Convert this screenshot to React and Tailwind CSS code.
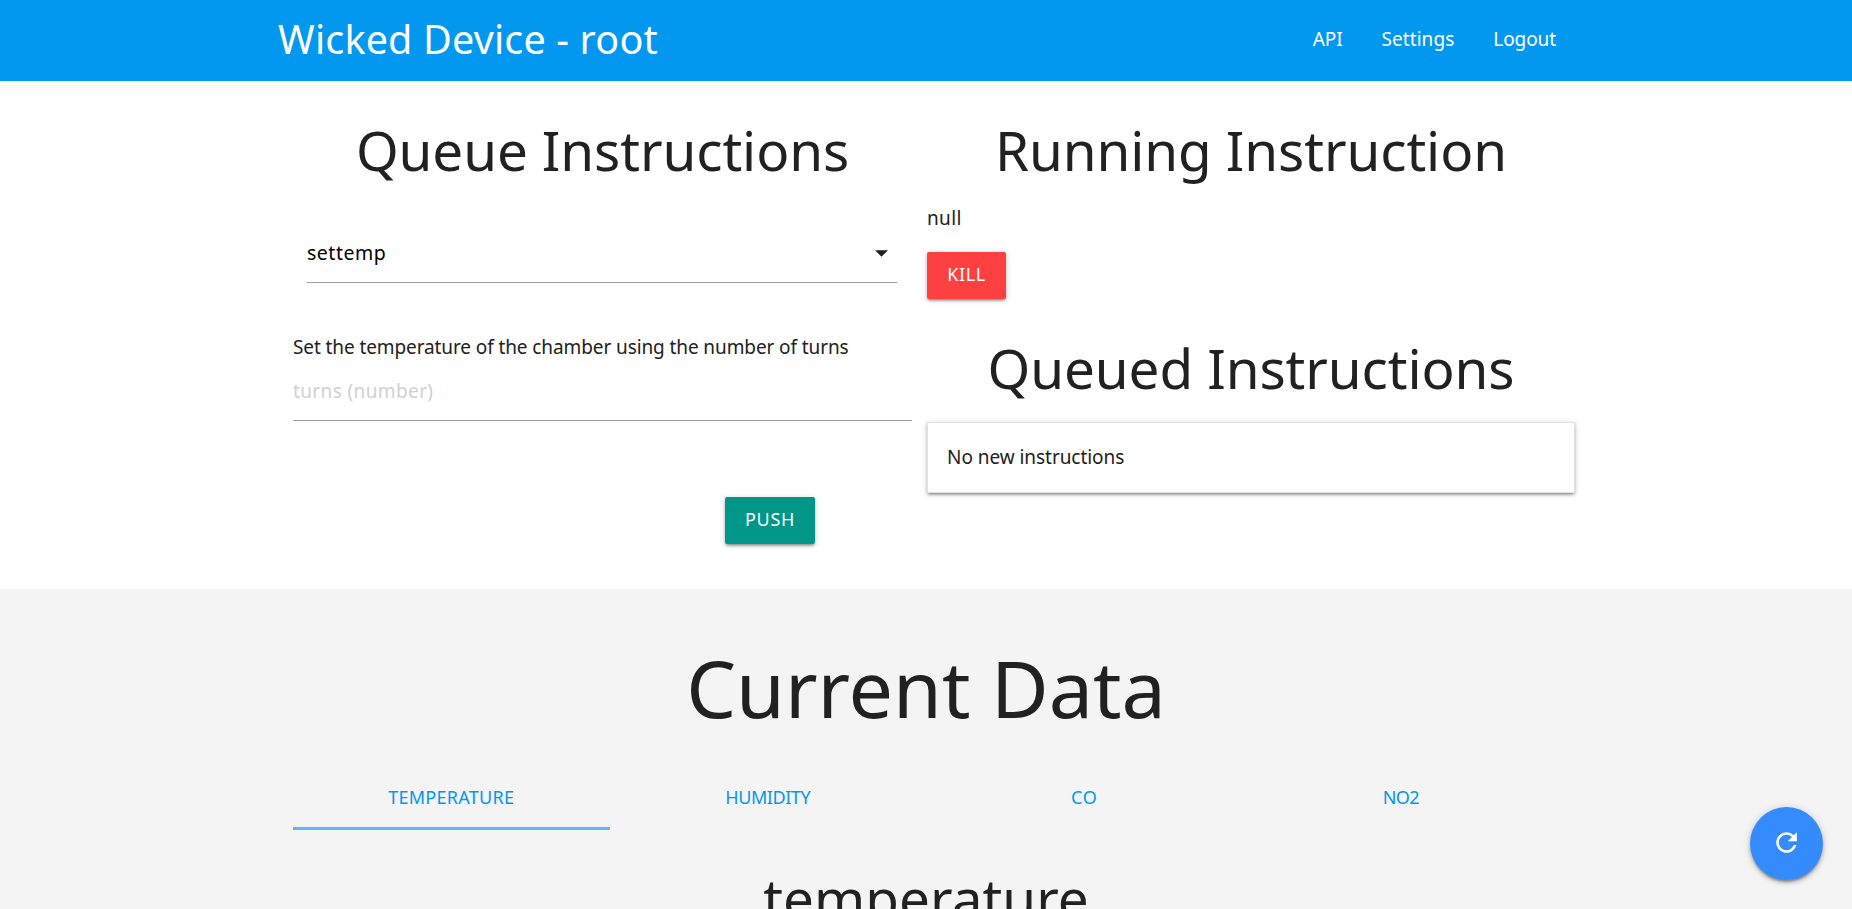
const elevation =
  "shadow-[0_2px_3px_0_rgba(0,0,0,0.2),0_1px_6px_0_rgba(0,0,0,0.16),0_3px_2px_-2px_rgba(0,0,0,0.24)]";

const tabs = [
  { label: "Temperature", active: true, tracking: "tracking-[0.28px]" },
  { label: "Humidity", tracking: "tracking-[-0.45px]" },
  { label: "CO", tracking: "tracking-[0.6px]" },
  { label: "NO2", tracking: "tracking-[-0.6px]" },
];

function Heading({ children, className = "" }) {
  return (
    <h3 className={`text-center text-[54.8px] leading-[80px] tracking-[-0.1px] ${className}`}>
      {children}
    </h3>
  );
}

function Header() {
  return (
    <nav className="h-[81px] shrink-0 bg-[#0298f0] text-white">
      <div className="flex justify-between pl-[278px] pr-[296px] leading-[78px]">
        <a className="text-[39.5px] tracking-[0.17px]">Wicked Device - root</a>
        <ul className="flex gap-[39px] text-[19px]">
          <li className="tracking-[-0.1px]">API</li>
          <li className="tracking-[0.07px]">Settings</li>
          <li className="tracking-[-0.1px]">Logout</li>
        </ul>
      </div>
    </nav>
  );
}

function QueueForm() {
  return (
    <section className="flex w-[619px] flex-col">
      <Heading>Queue Instructions</Heading>
      <div className="ml-[14px] mr-[15px] mt-[35px] flex h-[58px] items-center justify-between border-b border-[#9e9e9e] pr-[9px]">
        <span className="pb-px text-[19.5px] leading-[56px] tracking-[0.5px] text-black">settemp</span>
        <svg className="h-[7px] w-[13px]" viewBox="0 0 13 7" fill="currentColor">
          <path d="M0 .3h13L6.5 6.7z" />
        </svg>
      </div>
      <p className="mt-[50px] whitespace-nowrap text-[19px] leading-7 tracking-[-0.1px]">
        Set the temperature of the chamber using the number of turns
      </p>
      <input
        className="mt-[2px] h-[58px] border-b border-[#9e9e9e] pb-px text-[19px] tracking-[0.38px] outline-none placeholder:text-[#d1d1d1]"
        placeholder="turns (number)"
      />
      <button
        className={`ml-[432px] mt-[76px] h-[47px] w-[90px] rounded-[2px] bg-[#009688] pb-[3px] text-[18px] leading-[44px] tracking-[0.69px] text-white ${elevation}`}
      >
        PUSH
      </button>
    </section>
  );
}

function Instructions() {
  return (
    <section className="flex w-[648px] flex-col">
      <Heading>Running Instruction</Heading>
      <p className="mt-[14px] text-[19px] leading-7 tracking-[0.35px]">null</p>
      <button
        className={`mt-5 h-[47px] w-[79px] rounded-[2px] bg-[#ff4040] pb-[3px] text-[18px] leading-[44px] tracking-[0.6px] text-white ${elevation}`}
      >
        KILL
      </button>
      <Heading className="mt-[29px]">Queued Instructions</Heading>
      <div
        className={`mt-[14px] h-[71px] border border-[#e0e0e0] bg-white pl-[19px] text-[19px] leading-[68px] tracking-[-0.05px] ${elevation}`}
      >
        No new instructions
      </div>
    </section>
  );
}

function CurrentData() {
  return (
    <section className="grow bg-[#f4f4f4] pt-[44px]">
      <h2 className="text-center text-[79px] leading-[110px]">Current Data</h2>
      <ul className="mx-auto mt-[22px] grid w-[1266px] grid-cols-4">
        {tabs.map(({ label, active, tracking }) => (
          <li
            key={label}
            className={`h-[65px] border-b-3 text-center text-[18px] uppercase leading-[65px] text-[#0298f0] ${tracking} ${
              active ? "border-[#5fb8f8]" : "border-transparent"
            }`}
          >
            {label}
          </li>
        ))}
      </ul>
      <Heading className="mt-[28px]">
        <span className="tracking-[0.05px]">temperature</span>
      </Heading>
    </section>
  );
}

export default function App() {
  return (
    <div className="flex h-screen flex-col overflow-hidden bg-white font-['Noto_Sans',sans-serif] text-[#212121]">
      <Header />
      <main className="flex h-[508px] shrink-0 gap-[15px] pl-[293px] pt-[29px]">
        <QueueForm />
        <Instructions />
      </main>
      <CurrentData />
      <button
        aria-label="Refresh"
        className="fixed bottom-[29px] right-[29px] flex size-[73px] items-center justify-center rounded-full bg-[#348bfc] pb-[2px] text-white shadow-[0_3px_4px_0_rgba(0,0,0,0.2),0_1px_8px_0_rgba(0,0,0,0.16),0_3px_2px_-1px_rgba(0,0,0,0.24)]"
      >
        <svg className="size-[31px]" viewBox="0 0 24 24" fill="currentColor">
          <path d="M17.65 6.35A7.958 7.958 0 0 0 12 4a8 8 0 1 0 7.73 10h-2.08A6 6 0 1 1 12 6c1.66 0 3.14.69 4.22 1.78L13 11h7V4z" />
        </svg>
      </button>
    </div>
  );
}
